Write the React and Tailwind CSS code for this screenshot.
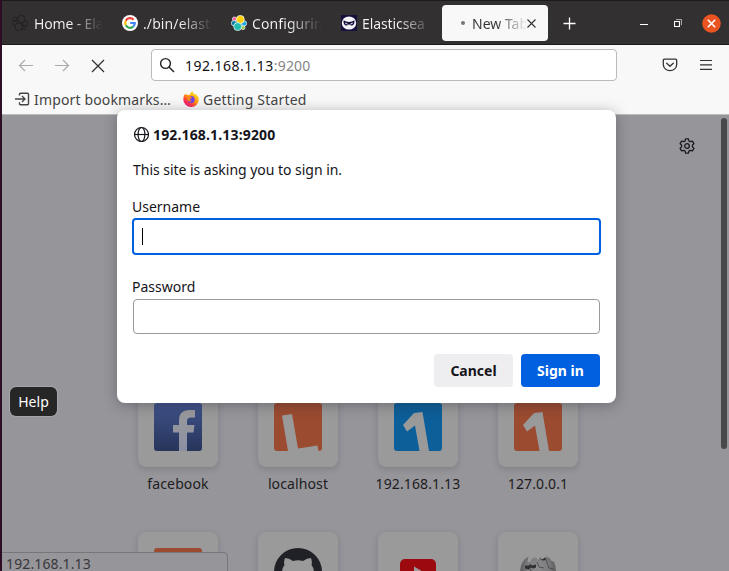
import React from 'react';

function ElasticCluster({ mono }) {
  const c = mono
    ? ['none', 'none', 'none', 'none', 'none', 'none']
    : ['#fed10a', '#24bbb1', '#ef5098', '#17a8e0', '#93c83e', '#0779a1'];
  const s = mono ? '#1d1b1c' : '#fff';
  if (mono) {
    return (
      <svg className="h-4 w-4 shrink-0" viewBox="0 0 16 16" stroke={s} strokeWidth="0.7" fill="#323031">
        <circle cx="3.4" cy="4" r="2" />
        <circle cx="12" cy="12.8" r="2" />
        <circle cx="2.9" cy="8.2" r="2.5" />
        <circle cx="13.1" cy="8.4" r="2.5" />
        <circle cx="9.3" cy="4.1" r="3.7" />
        <circle cx="6.7" cy="11.8" r="3.7" />
      </svg>
    );
  }
  return (
    <svg className="h-4 w-4 shrink-0" viewBox="0 0 16 16" stroke={s} strokeWidth="0.7">
      <circle cx="3.4" cy="4" r="2" fill={c[2]} />
      <circle cx="12" cy="12.6" r="2" fill={c[4]} />
      <circle cx="2.9" cy="8.2" r="2.6" fill={c[5]} />
      <circle cx="13.1" cy="8.4" r="2.6" fill={c[3]} />
      <circle cx="9.3" cy="4.4" r="4" fill={c[0]} />
      <circle cx="6.7" cy="11.6" r="4" fill={c[1]} />
    </svg>
  );
}

function GoogleIcon() {
  return (
    <svg className="h-4 w-4 shrink-0" viewBox="0 0 16 16" fill="none" strokeWidth="2.2">
      <circle cx="8" cy="8" r="8" fill="#fff" />
      <path d="M11.6 4.7A4.8 4.8 0 0 0 3.8 5.7" stroke="#ea4335" />
      <path d="M3.8 5.7A4.8 4.8 0 0 0 3.8 10.3" stroke="#fbbc05" />
      <path d="M3.8 10.3A4.8 4.8 0 0 0 11.2 11.6" stroke="#34a853" />
      <path d="M11.2 11.6A4.8 4.8 0 0 0 12.8 8H8.2" stroke="#4285f4" />
    </svg>
  );
}

function MaskIcon() {
  return (
    <svg className="h-4 w-4 shrink-0" viewBox="0 0 16 16">
      <rect width="16" height="16" fill="#17103c" />
      <ellipse cx="8" cy="8" rx="7.2" ry="6.600" fill="#f4f2f7" />
      <path d="M2.600 5.200Q5 6.800 8 7Q11 6.800 13.400 5.200Q13.800 9 11.800 10.200Q9.700 10.900 8 9.200Q6.300 10.900 4.200 10.200Q2.200 9 2.600 5.200Z" fill="#17103c" />
      <path d="M4.200 8l2.400 1.200M11.800 8l-2.400 1.200" stroke="#f4f2f7" strokeWidth="1" />
    </svg>
  );
}

function FirefoxIcon() {
  return (
    <svg className="h-4 w-4 shrink-0" viewBox="0 0 16 16">
      <defs>
        <linearGradient id="fox" x1="0.8" y1="0.1" x2="0.2" y2="0.95">
          <stop offset="0" stopColor="#ffe226" />
          <stop offset="0.45" stopColor="#ff980e" />
          <stop offset="0.75" stopColor="#ff3647" />
          <stop offset="1" stopColor="#e31587" />
        </linearGradient>
      </defs>
      <path d="M1.6 3.1L2 4.2L3.4 2.6L4 4.1Q5.5 3.7 6.5 4.1Q7.8 .8 9.5 0Q9.7 2 11.8 3.5L12.8 3Q15.8 5.3 15.8 8.6A7.6 7.4 0 0 1 8 16A7.7 7.5 0 0 1 .3 8.5Q.3 5 1.6 3.1Z" fill="url(#fox)" />
      <circle cx="8.2" cy="8.5" r="3.5" fill="#7542e5" />
      <path d="M3.8 5.2Q6 4 7.5 5.6L9.2 6.4Q8.8 7.5 7.2 7.6Q6.7 9.7 8.7 10.2Q6.3 11.3 4.7 9.2Z" fill="#ff8a16" />
    </svg>
  );
}

function Tab({ icon, children, width }) {
  return (
    <div className={'flex items-center gap-[6px] ' + width}>
      {icon}
      <div className="w-[72px] whitespace-nowrap bg-gradient-to-r from-[#f4f4f4] from-50% to-transparent to-95% bg-clip-text text-transparent">
        {children}
      </div>
    </div>
  );
}

function TitleBar() {
  return (
    <div className="flex h-[45px] shrink-0 items-center border-b border-t border-[#1c1b1c] bg-[#323031] pl-[10px] pt-[1px]">
      <Tab width="w-[110px]" icon={<ElasticCluster mono />}><span className="tracking-[-0.15px]">Home - Ela</span></Tab>
      <Tab width="w-[109px]" icon={<GoogleIcon />}><span className="-ml-px tracking-[0.1px]">./bin/elast</span></Tab>
      <Tab width="w-[110px]" icon={<ElasticCluster />}><span className="-ml-px tracking-[0.1px]">Configurin</span></Tab>
      <Tab width="w-[101px]" icon={<MaskIcon />}><span className="-ml-px tracking-[-0.1px]">Elasticsea</span></Tab>
      <div className="flex h-9 w-[106px] items-center rounded bg-[#f8f8f8] pl-[19px]">
        <span className="mr-[7px] h-1 w-1 rounded-full bg-[#777]" />
        <span className="w-[55px] whitespace-nowrap bg-gradient-to-r from-[#333] from-45% to-transparent bg-clip-text text-transparent">New Tab</span>
        <svg className="h-[9px] w-[9px]" viewBox="0 0 9 9" stroke="#333" strokeWidth="1.1"><path d="M.5 .5l8 8M8.500 .5l-8 8" /></svg>
      </div>
      <svg className="ml-[15px] h-[13px] w-[13px]" viewBox="0 0 13 13" stroke="#fff" strokeWidth="1.3"><path d="M6.500 .5v12M.5 6.500h12" /></svg>
      <svg className="ml-[64px] h-2 w-2 " viewBox="0 0 8 8" stroke="#fff"><path d="M0 5.500h8" /></svg>
      <svg className="ml-[26px] h-2 w-2" viewBox="0 0 8 8" fill="none" stroke="#fff"><path d="M.5 2.500h5v5h-5z" strokeWidth="1.1" /><path d="M2 .5h5.500v5.500" stroke="#aaa" /></svg>
      <svg className="ml-[20px] h-[19px] w-[19px]" viewBox="0 0 19 19" stroke="#fff" strokeWidth="1.6"><circle cx="9.500" cy="9.500" r="9.300" fill="#e95420" stroke="none" /><path d="M5.800 5.800l7.400 7.400M13.200 5.800l-7.400 7.400" /></svg>
    </div>
  );
}

function Toolbar() {
  return (
    <div className="flex h-[70px] shrink-0 flex-col border-b border-[#bdbdbf] bg-[#f8f8f8] pt-1">
      <div className="flex h-8 items-center pl-4">
        <svg className="h-4 w-4" viewBox="0 0 16 16" fill="none" stroke="#aaa" strokeWidth="1.2"><path d="M15 8.500H1.500M7 3L1.500 8.500L7 14" /></svg>
        <svg className="ml-5 h-4 w-4" viewBox="0 0 16 16" fill="none" stroke="#aaa" strokeWidth="1.2"><path d="M1 8.500h13.500M9 3L14.500 8.500L9 14" /></svg>
        <svg className="ml-5 h-4 w-4" viewBox="0 0 16 16" stroke="#333" strokeWidth="1.3"><path d="M2 3l12 12M14 3l-12 12" /></svg>
        <div className="ml-[45px] flex h-8 w-[466px] items-center rounded border border-[#bababa] bg-white pl-[7px] text-[#111]">
          <svg className="mr-[10px] h-4 w-4" viewBox="0 0 16 16" fill="none" stroke="#222" strokeWidth="1.4"><circle cx="6.500" cy="6.500" r="4.900" /><path d="M10 10L15 15" /></svg>
          <span className="tracking-[0.45px]">192.168.1.13</span><span className="tracking-[0.2px] text-[#858585]">:9200</span>
        </div>
        <svg className="ml-[45px] h-4 w-4" viewBox="0 0 16 16" fill="none" stroke="#333" strokeWidth="1.3" strokeLinecap="round" strokeLinejoin="round"><path d="M2.500 2.200h11q1.200 0 1.200 1.200V7.500a6.700 6.200 0 0 1-13.400 0V3.400q0-1.200 1.200-1.200zM4.700 6.200L8 9.300L11.300 6.200" /></svg>
        <svg className="ml-5 h-4 w-4" viewBox="0 0 16 16" stroke="#333" strokeWidth="1.2"><path d="M2 3.500h12M2 7.900h12M2 12.400h12" /></svg>
      </div>
      <div className="mt-[3px] flex h-8 items-center pl-[13px] text-[#444]">
        <svg className="mr-[3px] h-4 w-4" viewBox="0 0 16 16" fill="none" stroke="#444" strokeWidth="1.4"><path d="M4.500 4.500V3.200q0-1 1-1h7q1 0 1 1v9.600q0 1-1 1h-7q-1 0-1-1v-1.500M0 8h9.500M7 5l3 3l-3 3" /></svg>
        <span className="w-[149px] whitespace-nowrap tracking-[0.15px]">Import bookmarks…</span>
        <FirefoxIcon />
        <span className="ml-[4px] whitespace-nowrap tracking-[0.2px]">Getting Started</span>
      </div>
    </div>
  );
}

function FacebookIcon() {
  return (
    <svg className="h-12 w-12" viewBox="0 0 48 48">
      <defs>
        <linearGradient id="fb" x1="0" y1="0" x2="0" y2="1"><stop offset="0" stopColor="#40538a" /><stop offset="1" stopColor="#27355b" /></linearGradient>
        <linearGradient id="fbf" x1="0" y1="0" x2="0" y2="1"><stop offset="0" stopColor="#9a9a9b" /><stop offset="1" stopColor="#8b90a3" /></linearGradient>
      </defs>
      <rect width="48" height="48" rx="3" fill="url(#fb)" />
      <path d="M25 48V29.500H19V22h6v-4.500Q25 7 35.500 7H41v7.500h-4Q33 14.500 33 18v4h7.500l-1 7.500H33V48z" fill="url(#fbf)" />
    </svg>
  );
}

function LetterIcon({ color, kind }) {
  return (
    <svg className="h-12 w-12" viewBox="0 0 48 48">
      <rect width="48" height="48" rx="3" fill={color} />
      {kind === 'L' && <path d="M8 12.500L18 11L24 45.500L43.500 42.500L44.500 48H14z" fill="#9a9a9b" />}
      {kind === '1' && <path d="M20 10L28.500 9L35 48H25.500L21 22.500L13 28.500L9 22z" fill="#9a9a9b" />}
    </svg>
  );
}

function GithubIcon() {
  return (
    <svg className="h-12 w-12" viewBox="0 0 48 48">
      <circle cx="24" cy="24" r="24" fill="#202126" />
      <path d="M11 10Q15 10 19 13Q24 11.500 29 13Q33 10 37 10Q38.500 14 37.500 17Q40 20 40 25Q40 36 29 37V48H19V37Q8 36 8 25Q8 20 10.500 17Q9.500 14 11 10z" fill="#9a9a9b" />
    </svg>
  );
}

function YoutubeIcon() {
  return (
    <svg className="h-12 w-12" viewBox="0 0 48 48">
      <rect x="6" y="11" width="36" height="26" rx="5" fill="#9c090f" />
      <path d="M20 18.500v11l9.500-5.500z" fill="#9a9a9b" />
    </svg>
  );
}

function WikipediaIcon() {
  return (
    <svg className="h-12 w-12" viewBox="0 0 48 48">
      <defs><radialGradient id="globe" cx="0.5" cy="0.3" r="0.6"><stop offset="0" stopColor="#8c8c8e" /><stop offset="0.5" stopColor="#7c7c7e" /><stop offset="1" stopColor="#4c4c4e" /></radialGradient></defs>
      <path d="M14.500 8.500L13.500 14L16 14L18 10.500L22 9.500L24 12L26 9L29 12L32 8.500Q36 9.500 37 12.500L40 14Q42 18 42 25A18 18 0 0 1 6 25Q6 13 14.500 8.500z" fill="url(#globe)" />
      <path d="M11 17.500h4l1-1.500 2 1.500 4-1v3l-3 1-2-1-2 2-4-1zM25.500 10l3 1.500 2-2 2 2-3 1-2-.5z" fill="#303033" />
      <path d="M17 21l-1 6M23 14l2 5 5 1M32 12l3 8 5 1M9 25l6-1 4 2 7-1" stroke="#505052" fill="none" />
    </svg>
  );
}

function Tile({ icon, label }) {
  return (
    <div className="flex w-20 flex-col items-center">
      <div className="flex h-20 w-20 items-center justify-center rounded-lg bg-[#9a9a9b] shadow-[0_2px_6px_rgba(40,40,50,0.2)]">{icon}</div>
      <div className="mt-[7px] h-5 whitespace-nowrap leading-5 tracking-[0.12px] text-[#1d1c21]">{label}</div>
    </div>
  );
}

function NewTabPage() {
  return (
    <div className="flex flex-1 justify-between bg-[#96959a]">
      <div className="grid h-fit grid-cols-4 gap-x-10 gap-y-[38px] pl-[136px] pt-[272px]">
        <Tile icon={<FacebookIcon />} label="facebook" />
        <Tile icon={<LetterIcon color="#9b4b30" kind="L" />} label="localhost" />
        <Tile icon={<LetterIcon color="#0d5f99" kind="1" />} label="192.168.1.13" />
        <Tile icon={<LetterIcon color="#9b4b30" kind="1" />} label="127.0.0.1" />
        <Tile icon={<LetterIcon color="#9b4b30" />} label="" />
        <Tile icon={<GithubIcon />} label="" />
        <Tile icon={<YoutubeIcon />} label="" />
        <Tile icon={<WikipediaIcon />} label="" />
      </div>
      <div className="flex gap-[26px] pr-[2px] pt-[3px]">
        <svg className="mt-5 h-4 w-4" viewBox="0 0 16 16" fill="none" stroke="#1b1a20" strokeWidth="1.3" strokeLinejoin="round">
          <path d="M6.600 .8h2.800l.5 2.100 1.300.8 2.200-.6 1.500 2.500L13.400 7.200v1.600l1.500 1.600-1.500 2.500-2.200-.6-1.300.8-.5 2.100H6.600l-.5-2.100-1.300-.8-2.200.6-1.500-2.500L2.600 8.800V7.200L1.100 5.600l1.500-2.500 2.200.6 1.300-.8z" />
          <circle cx="8" cy="8" r="2.300" />
        </svg>
        <div className="h-[331px] w-[6px] rounded-full bg-[#49494b]" />
      </div>
    </div>
  );
}

function SignInDialog() {
  return (
    <div className="absolute left-[115px] top-[110px] flex h-[293px] w-[499px] flex-col rounded-lg bg-white px-4 pt-[14px] text-[#15141a] shadow-[0_2px_14px_rgba(30,30,40,0.35)]">
      <div className="flex h-5 items-center font-bold">
        <svg className="mr-[4px] h-4 w-4" viewBox="0 0 16 16" fill="none" stroke="#15141a" strokeWidth="1.2"><circle cx="8.500" cy="8.500" r="7" /><ellipse cx="8.500" cy="8.500" rx="3.400" ry="7" /><path d="M1.500 8.500h14" /></svg>
        <span className="tracking-[0.15px]">192.168.1.13:9200</span>
      </div>
      <div className="mt-[16px] h-5 leading-5 tracking-[-0.03px]">This site is asking you to sign in.</div>
      <div className="-ml-px mt-[17px] h-5 leading-5">Username</div>
      <div className="-mx-px mt-[1px] flex h-[37px] items-center rounded border-2 border-[#0060df] pl-2">
        <span className="h-[17px] w-px bg-black" />
      </div>
      <div className="-ml-px mt-[22px] h-5 leading-5">Password</div>
      <div className="mt-[2px] h-[35px] rounded border border-[#9a9a9d]" />
      <div className="mt-5 flex justify-end gap-2 font-bold">
        <button className="h-[33px] w-[79px] rounded bg-[#eeeef0]">Cancel</button>
        <button className="h-[33px] w-[79px] rounded bg-[#0060df] text-white">Sign in</button>
      </div>
    </div>
  );
}

export default function App() {
  return (
    <div className="relative flex h-[571px] w-[729px] flex-col overflow-hidden border-l-2 border-[#2e0d24] font-['Noto_Sans',sans-serif] text-[14px]">
      <TitleBar />
      <Toolbar />
      <NewTabPage />
      <SignInDialog />
      <div className="absolute left-[8px] top-[387px] flex h-[29px] w-[47px] items-center justify-center rounded-md bg-[#262626] text-white ring-1 ring-[#a5a4a8]">Help</div>
      <div className="absolute -left-px top-[552px] h-5 w-[227px] rounded-tr border border-[#777679] bg-[#96959a] pl-[4px] leading-[22px] tracking-[0.12px] text-[#38373b]">192.168.1.13</div>
    </div>
  );
}
